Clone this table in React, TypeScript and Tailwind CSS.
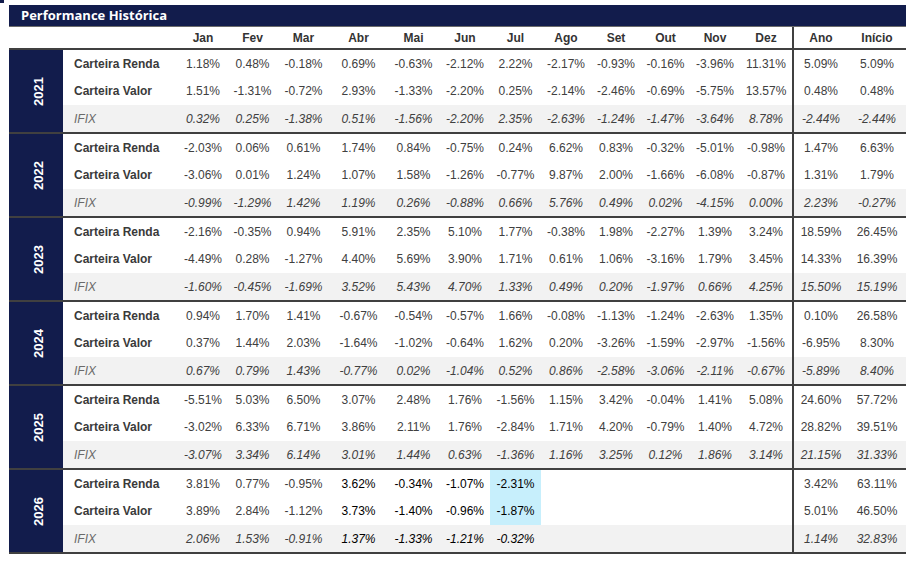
import React from "react";

type Row = { label: string; vals: string[]; tot: [string, string] };
type Block = { year: string; rows: Row[] };

const months = ["Jan", "Fev", "Mar", "Abr", "Mai", "Jun", "Jul", "Ago", "Set", "Out", "Nov", "Dez"];

const s = (t: string) => t.split(" ");

const data: Block[] = [
  {
    year: "2021",
    rows: [
      { label: "Carteira Renda", vals: s("1.18% 0.48% -0.18% 0.69% -0.63% -2.12% 2.22% -2.17% -0.93% -0.16% -3.96% 11.31%"), tot: ["5.09%", "5.09%"] },
      { label: "Carteira Valor", vals: s("1.51% -1.31% -0.72% 2.93% -1.33% -2.20% 0.25% -2.14% -2.46% -0.69% -5.75% 13.57%"), tot: ["0.48%", "0.48%"] },
      { label: "IFIX", vals: s("0.32% 0.25% -1.38% 0.51% -1.56% -2.20% 2.35% -2.63% -1.24% -1.47% -3.64% 8.78%"), tot: ["-2.44%", "-2.44%"] },
    ],
  },
  {
    year: "2022",
    rows: [
      { label: "Carteira Renda", vals: s("-2.03% 0.06% 0.61% 1.74% 0.84% -0.75% 0.24% 6.62% 0.83% -0.32% -5.01% -0.98%"), tot: ["1.47%", "6.63%"] },
      { label: "Carteira Valor", vals: s("-3.06% 0.01% 1.24% 1.07% 1.58% -1.26% -0.77% 9.87% 2.00% -1.66% -6.08% -0.87%"), tot: ["1.31%", "1.79%"] },
      { label: "IFIX", vals: s("-0.99% -1.29% 1.42% 1.19% 0.26% -0.88% 0.66% 5.76% 0.49% 0.02% -4.15% 0.00%"), tot: ["2.23%", "-0.27%"] },
    ],
  },
  {
    year: "2023",
    rows: [
      { label: "Carteira Renda", vals: s("-2.16% -0.35% 0.94% 5.91% 2.35% 5.10% 1.77% -0.38% 1.98% -2.27% 1.39% 3.24%"), tot: ["18.59%", "26.45%"] },
      { label: "Carteira Valor", vals: s("-4.49% 0.28% -1.27% 4.40% 5.69% 3.90% 1.71% 0.61% 1.06% -3.16% 1.79% 3.45%"), tot: ["14.33%", "16.39%"] },
      { label: "IFIX", vals: s("-1.60% -0.45% -1.69% 3.52% 5.43% 4.70% 1.33% 0.49% 0.20% -1.97% 0.66% 4.25%"), tot: ["15.50%", "15.19%"] },
    ],
  },
  {
    year: "2024",
    rows: [
      { label: "Carteira Renda", vals: s("0.94% 1.70% 1.41% -0.67% -0.54% -0.57% 1.66% -0.08% -1.13% -1.24% -2.63% 1.35%"), tot: ["0.10%", "26.58%"] },
      { label: "Carteira Valor", vals: s("0.37% 1.44% 2.03% -1.64% -1.02% -0.64% 1.62% 0.20% -3.26% -1.59% -2.97% -1.56%"), tot: ["-6.95%", "8.30%"] },
      { label: "IFIX", vals: s("0.67% 0.79% 1.43% -0.77% 0.02% -1.04% 0.52% 0.86% -2.58% -3.06% -2.11% -0.67%"), tot: ["-5.89%", "8.40%"] },
    ],
  },
  {
    year: "2025",
    rows: [
      { label: "Carteira Renda", vals: s("-5.51% 5.03% 6.50% 3.07% 2.48% 1.76% -1.56% 1.15% 3.42% -0.04% 1.41% 5.08%"), tot: ["24.60%", "57.72%"] },
      { label: "Carteira Valor", vals: s("-3.02% 6.33% 6.71% 3.86% 2.11% 1.76% -2.84% 1.71% 4.20% -0.79% 1.40% 4.72%"), tot: ["28.82%", "39.51%"] },
      { label: "IFIX", vals: s("-3.07% 3.34% 6.14% 3.01% 1.44% 0.63% -1.36% 1.16% 3.25% 0.12% 1.86% 3.14%"), tot: ["21.15%", "31.33%"] },
    ],
  },
  {
    year: "2026",
    rows: [
      { label: "Carteira Renda", vals: s("3.81% 0.77% -0.95% 3.62% -0.34% -1.07% -2.31%"), tot: ["3.42%", "63.11%"] },
      { label: "Carteira Valor", vals: s("3.89% 2.84% -1.12% 3.73% -1.40% -0.96% -1.87%"), tot: ["5.01%", "46.50%"] },
      { label: "IFIX", vals: s("2.06% 1.53% -0.91% 1.37% -1.33% -1.21% -0.32%"), tot: ["1.14%", "32.83%"] },
    ],
  },
];

const GRID =
  "grid grid-cols-[115px_50px_49px_53px_57px_53px_50px_51px_50px_50px_49px_50px_52px_2px_54px_58px]";

function Sep() {
  return <div className="h-[2px] bg-[#404040]" />;
}

function DataRow({ row, ri, year }: { row: Row; ri: number; year: string }) {
  const isIfix = row.label === "IFIX";
  const h = ri === 1 ? "h-[28px]" : "h-[27px]";
  const bg = isIfix ? "bg-[#f2f2f2]" : "bg-white";
  const is2026 = year === "2026";
  return (
    <div className={`${GRID} ${h} ${bg} items-stretch`}>
      <div
        className={`flex items-center pl-[11px] ${
          isIfix ? "italic text-[#6a6a6a]" : "font-bold text-[#3a3a3a]"
        }`}
      >
        {row.label}
      </div>
      {months.map((_, i) => {
        const v = row.vals[i] ?? "";
        const black = is2026 && i >= 3 && i <= 6;
        const hl = is2026 && i === 6 && !isIfix;
        return (
          <div
            key={i}
            className={`flex items-center justify-center ${isIfix ? "italic" : ""} ${
              black ? "text-black" : "text-[#404040]"
            } ${hl ? "bg-[#c7effc]" : ""}`}
          >
            {v}
          </div>
        );
      })}
      <div className="bg-[#404040]" />
      <div className={`flex items-center justify-center text-[#404040] ${isIfix ? "italic" : ""}`}>{row.tot[0]}</div>
      <div className={`flex items-center justify-center text-[#404040] ${isIfix ? "italic" : ""}`}>{row.tot[1]}</div>
    </div>
  );
}

export default function App() {
  return (
    <div className="relative w-[906px] h-[561px] bg-white overflow-hidden font-[family-name:'Liberation_Sans',Arial,sans-serif] text-[12px] leading-none">
      <div className="absolute left-0 top-0 w-[4px] h-[3px] bg-[#121c4c]" />
      <div className="pt-[5px] pl-[9px]">
        <div className="h-[21px] bg-[#121c4c] flex items-center pl-[12px] text-white font-[family-name:'Open_Sans',sans-serif] font-bold text-[13px]">
          Performance Histórica
        </div>
        <div className="h-px bg-[#6b6b6b]" />
        <div className="flex h-[21px]">
          <div className="w-[54px]" />
          <div className={`${GRID} font-bold text-[#333333]`}>
            <div />
            {months.map((m) => (
              <div key={m} className="flex items-center justify-center">
                {m}
              </div>
            ))}
            <div className="bg-[#404040]" />
            <div className="flex items-center justify-center">Ano</div>
            <div className="flex items-center justify-center">Início</div>
          </div>
        </div>
        {data.map((b) => (
          <div key={b.year}>
            <Sep />
            <div className="flex h-[82px]">
              <div className="w-[54px] bg-[#121c4c] flex items-center justify-center">
                <span className="-rotate-90 text-white font-bold text-[13px] translate-x-[2px]">{b.year}</span>
              </div>
              <div className="flex flex-col">
                {b.rows.map((r, ri) => (
                  <DataRow key={ri} row={r} ri={ri} year={b.year} />
                ))}
              </div>
            </div>
          </div>
        ))}
        <Sep />
      </div>
    </div>
  );
}
